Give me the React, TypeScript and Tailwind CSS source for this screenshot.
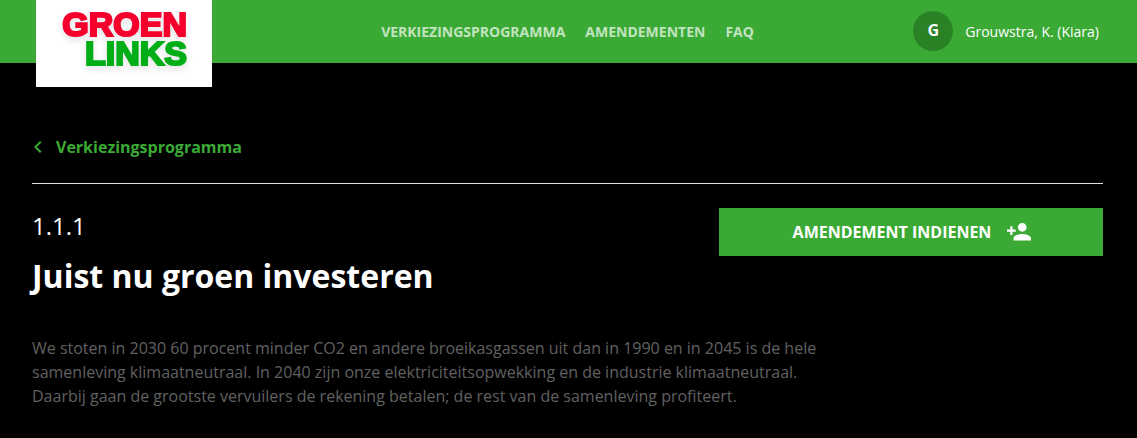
import { MdChevronLeft } from "react-icons/md";

const links = ["Verkiezingsprogramma", "Amendementen", "FAQ"];

function Logo() {
  return (
    <a
      href="#"
      aria-label="GroenLinks"
      className="absolute left-9 top-0 h-[87px] w-44 bg-white"
    >
      <svg viewBox="0 0 176 87" className="h-full w-full" aria-hidden="true">
        <g
          className="font-['Liberation_Sans',Arial,sans-serif] text-[34px] font-bold drop-shadow-[0_4px_3px_rgba(0,0,0,0.1)]"
          strokeWidth="2.2"
          textAnchor="end"
        >
          <text x="151" y="36" fill="#f5002d" stroke="#f5002d">
            GROEN
          </text>
          <text x="151" y="65" fill="#00ae17" stroke="#00ae17">
            LINKS
          </text>
        </g>
      </svg>
    </a>
  );
}

function PersonAddIcon() {
  return (
    <svg viewBox="1 4 22 16" className="w-6" fill="currentColor" aria-hidden="true">
      <path d="M15 12c2.21 0 4-1.79 4-4s-1.79-4-4-4-4 1.79-4 4 1.79 4 4 4zm-9-2V7H4v3H1v2h3v3h2v-3h3v-2H6zm9 4c-2.67 0-8 1.34-8 4v2h16v-2c0-2.66-5.33-4-8-4z" />
    </svg>
  );
}

export default function App() {
  return (
    <div className="min-h-screen bg-black font-['Open_Sans',sans-serif] text-white">
      <header className="relative grid h-[63px] grid-cols-[1fr_auto_1fr] items-center bg-[#3aaa35] pl-9 pr-[38px]">
        <Logo />
        <nav className="col-start-2 flex gap-5">
          {links.map((label) => (
            <a
              key={label}
              href="#"
              className="text-sm font-bold uppercase text-white/70"
            >
              {label}
            </a>
          ))}
        </nav>
        <a href="#" className="flex h-[62px] items-center gap-3 self-start justify-self-end">
          <span className="flex size-10 items-center justify-center rounded-full bg-[#298326] pb-0.5 font-bold">
            G
          </span>
          <span className="text-sm leading-[21px]">Grouwstra, K. (Kiara)</span>
        </a>
      </header>

      <main className="pl-8 pr-[34px] pt-[72px]">
        <a href="#" className="flex items-center gap-1.5 font-bold text-[#3aaa35]">
          <MdChevronLeft className="-ml-1.5 size-6" aria-hidden="true" />
          Verkiezingsprogramma
        </a>
        <hr className="mt-6 border-[#e0e0e0]" />

        <div className="mt-6 flex items-start justify-between gap-6">
          <div>
            <p className="text-2xl leading-9">1.1.1</p>
            <h1 className="mt-2 text-[32px] font-bold leading-12">
              Juist nu groen investeren
            </h1>
          </div>
          <button
            type="button"
            className="flex h-12 w-96 items-center justify-center gap-4 bg-[#3aaa35] pl-0.5 font-bold uppercase"
          >
            Amendement indienen
            <PersonAddIcon />
          </button>
        </div>

        <p className="mt-9 max-w-[800px] pb-8 leading-6 text-[#616161]">
          We stoten in 2030 60 procent minder CO2 en andere broeikasgassen uit dan
          in 1990 en in 2045 is de hele samenleving klimaatneutraal. In 2040 zijn
          onze elektriciteitsopwekking en de industrie klimaatneutraal. Daarbij
          gaan de grootste vervuilers de rekening betalen; de rest van de
          samenleving profiteert.
        </p>
      </main>
    </div>
  );
}
